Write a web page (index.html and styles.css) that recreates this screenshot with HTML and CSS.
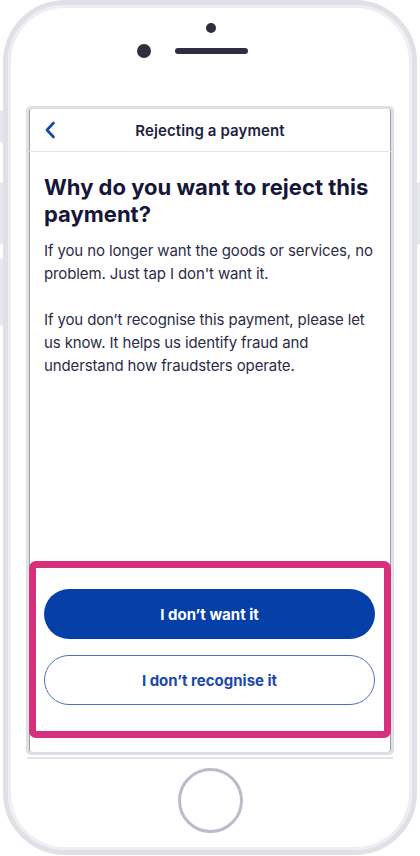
FILE: index.html
```html
<!DOCTYPE html>
<html lang="en">
<head>
<meta charset="utf-8">
<title>Rejecting a payment</title>
<link rel="stylesheet" href="styles.css">
</head>
<body>
<div class="device">
  <span class="side-btn side-mute"></span>
  <span class="side-btn side-vol-up"></span>
  <span class="side-btn side-vol-down"></span>
  <span class="side-btn side-power"></span>
  <div class="phone">
    <div class="top-bezel">
      <span class="sensor"></span>
      <div class="cam-row">
        <span class="camera"></span>
        <span class="speaker"></span>
        <span></span>
      </div>
    </div>
    <div class="screen">
      <header class="nav">
        <button class="back" aria-label="Back">
          <svg width="12" height="18" viewBox="0 0 12 18"><path d="M9.5 2 L3 9 L9.5 16" fill="none" stroke="#1746a8" stroke-width="2.6" stroke-linecap="round" stroke-linejoin="round"/></svg>
        </button>
        <h1 class="nav-title">Rejecting a payment</h1>
        <span class="nav-spacer"></span>
      </header>
      <main class="content">
        <h2 class="heading">Why do you want to reject this payment?</h2>
        <p class="body">If you no longer want the goods or services, no problem. Just tap I don't want it.</p>
        <p class="body">If you don’t recognise this payment, please let us know. It helps us identify fraud and understand how fraudsters operate.</p>
      </main>
      <footer class="actions">
        <button class="btn btn-primary">I don’t want it</button>
        <button class="btn btn-secondary">I don’t recognise it</button>
      </footer>
    </div>
    <div class="screen-shadow"></div>
    <div class="bottom-bezel">
      <span class="home"></span>
    </div>
  </div>
</div>
</body>
</html>
```
FILE: styles.css
```css
* { box-sizing: border-box; }
html, body {
  margin: 0;
  padding: 0;
  background: #ffffff;
  font-family: "Inter", "Noto Sans", sans-serif;
}
.device {
  position: relative;
  width: 420px;
  height: 856px;
  padding: 0 3px 1px 3px;
}
.side-btn {
  position: absolute;
  width: 4px;
  background: #e6e7eb;
  border-radius: 2px;
}
.side-mute { left: 0; top: 110px; height: 33px; }
.side-vol-up { left: 0; top: 182px; height: 62px; }
.side-vol-down { left: 0; top: 258px; height: 68px; }
.side-power { right: 0; top: 182px; height: 63px; }

.phone {
  position: relative;
  height: 855px;
  border: 5px solid #e0e1e7;
  border-radius: 62px;
  background: #ffffff;
  box-shadow: inset 0 0 0 3px #eeeff3;
  display: flex;
  flex-direction: column;
  align-items: stretch;
}
.top-bezel {
  height: 101px;
  display: flex;
  flex-direction: column;
  align-items: center;
  padding-top: 18px;
}
.sensor {
  width: 10px;
  height: 10px;
  border-radius: 50%;
  background: #2e2f3d;
  margin-left: 1px;
}
.cam-row {
  margin-top: 11px;
  width: 100%;
  display: grid;
  grid-template-columns: 1fr auto 1fr;
  align-items: center;
}
.camera {
  justify-self: end;
  width: 14px;
  height: 14px;
  border-radius: 50%;
  background: #2e2f3d;
  margin-right: 22px;
}
.speaker {
  width: 73px;
  height: 6px;
  border-radius: 3px;
  background: #2e2f3d;
  margin-left: 2px;
}
.screen {
  margin: 0 18px;
  height: 649px;
  border: 3px solid #dfe0e6;
  border-radius: 5px;
  display: flex;
  flex-direction: column;
  background: #fff;
  box-shadow: inset 1px 0 0 #9c9ca4, inset -1px 0 0 #9c9ca4;
  overflow: hidden;
}
.screen-shadow {
  margin: 2px 19px 0 19px;
  height: 2px;
  background: #e3e4e9;
}
.nav {
  height: 43px;
  flex: none;
  display: grid;
  grid-template-columns: 40px 1fr 40px;
  align-items: center;
  border-bottom: 1px solid #e3e3e8;
}
.back {
  border: 0;
  background: none;
  padding: 0 0 0 15px;
  display: flex;
  align-items: center;
  height: 100%;
}
.nav-title {
  margin: 0;
  text-align: center;
  font-size: 15px;
  font-weight: 600;
  color: #1e1f3e;
  letter-spacing: 0.1px;
}
.content {
  flex: 1;
  padding: 22px 14px 0 15px;
}
.heading {
  margin: 0 0 11px 0;
  font-size: 22px;
  line-height: 27px;
  font-weight: 700;
  color: #16163a;
  letter-spacing: 0;
}
.body {
  margin: 0 0 23px 0;
  font-size: 15px;
  line-height: 23px;
  color: #2c2c48;
  letter-spacing: -0.12px;
}
.actions {
  flex: none;
  margin-bottom: 14px;
  border: 7px solid #d5307b;
  border-radius: 7px;
  padding: 21px 9px 26px 8px;
  display: flex;
  flex-direction: column;
  gap: 16px;
}
.btn {
  height: 50px;
  border-radius: 25px;
  font-family: inherit;
  font-size: 15px;
  font-weight: 700;
  cursor: pointer;
}
.btn-primary {
  background: #0540a8;
  border: 0;
  color: #ffffff;
}
.btn-secondary {
  background: #ffffff;
  border: 1px solid #4e6fc4;
  color: #1a48ad;
}
.bottom-bezel {
  flex: 1;
  display: flex;
  justify-content: center;
  padding-top: 9px;
}
.home {
  width: 65px;
  height: 65px;
  border-radius: 50%;
  border: 3px solid #b9bdcb;
}
```
